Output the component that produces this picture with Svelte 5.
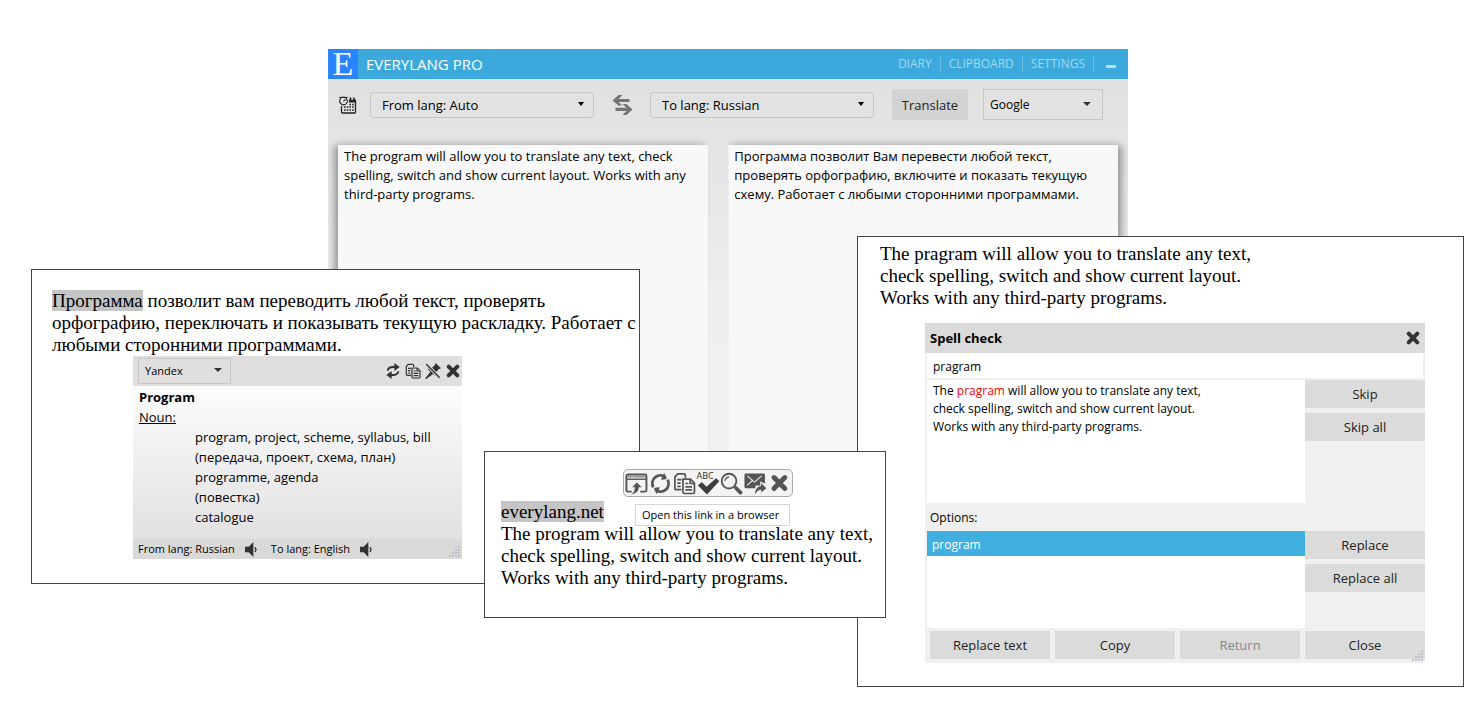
<script>
    let source = $state(
        "The program will allow you to translate any text, check spelling, switch and show current layout. Works with any third-party programs.",
    );
    let result = $state(
        "Программа позволит Вам перевести любой текст, проверять орфографию, включите и показать текущую схему. Работает с любыми сторонними программами.",
    );
    let word = $state("pragram");

    const meanings = [
        "program, project, scheme, syllabus, bill",
        "(передача, проект, схема, план)",
        "programme, agenda",
        "(повестка)",
        "catalogue",
    ];
    const menu = ["DIARY", "CLIPBOARD", "SETTINGS"];
</script>

{#snippet closeIcon()}
    <svg viewBox="0 0 24 24" aria-hidden="true">
        <path d="M5.5 5.5 18.5 18.5M18.5 5.5 5.5 18.5" stroke="currentColor" stroke-width="6" stroke-linecap="round" />
    </svg>
{/snippet}

{#snippet copyIcon()}
    <svg viewBox="0 0 24 24" fill="none" stroke="currentColor" stroke-width="1.8" aria-hidden="true">
        <path d="M9 18.5H3.5a1.5 1.5 0 0 1-1.5-1.5V5l3-3h6.500a1.500 1.500 0 0 1 1.500 1.500V6" />
        <path d="M4.500 8H9M4.500 11.500H8M4.500 15H8" />
        <path d="M10.500 7.500H18.500L22.500 11.500V21a1.500 1.500 0 0 1-1.500 1.500H12a1.500 1.500 0 0 1-1.500-1.500Z" />
        <path d="M18 7.500V12H22.500M13 12H16M13 15.500H20M13 18.800H20" />
    </svg>
{/snippet}

{#snippet speakerIcon()}
    <svg viewBox="0 0 14 16" aria-hidden="true">
        <path d="M0 5H4L9 0V16L4 11H0Z" fill="currentColor" />
        <path d="M10.500 5.500Q13 8 10.500 10.500" fill="none" stroke="currentColor" stroke-width="1.500" />
    </svg>
{/snippet}

{#snippet grip()}
    <svg class="grip" viewBox="0 0 12 12" aria-hidden="true">
        {#each [[9, 0], [6, 3], [9, 3], [3, 6], [6, 6], [9, 6], [0, 9], [3, 9], [6, 9], [9, 9]] as [x, y]}
            <rect {x} {y} width="2" height="2" />
        {/each}
    </svg>
{/snippet}

<main>
    <section class="translator">
        <header class="titlebar">
            <span class="logo">E</span>
            <h1>EVERYLANG PRO</h1>
            <nav>
                {#each menu as item}
                    <a href="#{item.toLowerCase()}">{item}</a>
                {/each}
                <button class="minimize" aria-label="Minimize"></button>
            </nav>
        </header>
        <div class="controls">
            <button class="history" aria-label="History">
                <svg viewBox="0 0 20 20" fill="none" stroke="#222" aria-hidden="true">
                    <path d="M11 5.500H17.500V17a1 1 0 0 1-1 1H4.500a1 1 0 0 1-1-1V11" stroke-width="1.300" />
                    <path d="M11 6.500H17.500" stroke-width="2" />
                    <path d="M12.500 2.500V6M16 2.500V6" stroke-width="1.600" />
                    <circle cx="5.500" cy="6" r="3.800" stroke-width="1.200" />
                    <path d="M5.500 6.500 7.500 4M3 3 1.500 2M8 3 9.500 2" stroke-width="1.100" />
                    <path d="M6 12H16M6 15H16" stroke-width="1.500" stroke-dasharray="1.600 1.100" />
                    <path d="M11.400 9.500H16" stroke-width="1.300" stroke-dasharray="1.600 1.100" />
                </svg>
            </button>
            <div class="drop lang">
                <select aria-label="From language"><option>From lang: Auto</option></select>
            </div>
            <button class="swap" aria-label="Swap languages">
                <svg viewBox="0 0 20 20" fill="#737373" aria-hidden="true">
                    <path d="M0 5.500 6 0H10L6 4H17V7H6L10 10.500H6Z" />
                    <path d="M20 14.500 14 9H10L14 12.800H3V16H14L10 20H14Z" />
                </svg>
            </button>
            <div class="drop lang">
                <select aria-label="To language"><option>To lang: Russian</option></select>
            </div>
            <button class="translate">Translate</button>
            <div class="drop engine">
                <select aria-label="Translation service"><option>Google</option></select>
            </div>
        </div>
        <div class="panels">
            <textarea class="from" aria-label="Source text" spellcheck="false" bind:value={source}></textarea>
            <textarea class="to" aria-label="Translation" spellcheck="false" bind:value={result}></textarea>
        </div>
    </section>

    <section class="sheet spelling">
        <p>
            The pragram will allow you to translate any text,<br />
            check spelling, switch and show current layout.<br />
            Works with any third-party programs.
        </p>
        <div class="dialog">
            <header>
                <h2>Spell check</h2>
                <button class="icon" aria-label="Close spell check">{@render closeIcon()}</button>
            </header>
            <input class="word" aria-label="Misspelled word" spellcheck="false" bind:value={word} />
            <div class="split">
                <div class="context">
                    The <em>pragram</em> will allow you to translate any text,<br />
                    check spelling, switch and show current layout.<br />
                    Works with any third-party programs.
                </div>
                <div class="side">
                    <button>Skip</button>
                    <button>Skip all</button>
                </div>
            </div>
            <label for="options">Options:</label>
            <div class="split">
                <select id="options" size="4">
                    <option selected>program</option>
                </select>
                <div class="side">
                    <button>Replace</button>
                    <button>Replace all</button>
                </div>
            </div>
            <footer>
                <button>Replace text</button>
                <button>Copy</button>
                <button disabled>Return</button>
                <button>Close</button>
            </footer>
            {@render grip()}
        </div>
    </section>

    <section class="sheet dictionary">
        <p>
            <mark>Программа</mark> позволит вам переводить любой текст, проверять<br />
            орфографию, переключать и показывать текущую раскладку. Работает с<br />
            любыми сторонними программами.
        </p>
        <div class="card">
            <header>
                <div class="drop small">
                    <select aria-label="Dictionary service"><option>Yandex</option></select>
                </div>
                <button class="icon" aria-label="Refresh">
                    <svg viewBox="0 0 24 24" fill="none" stroke="currentColor" stroke-width="3" aria-hidden="true">
                        <path d="M4 11.500Q5 6 12 6H16" />
                        <path d="M20 12.500Q19 18 12 18H8" />
                        <path d="M14 0 22 6 14 12ZM10 24 2 18 10 12Z" fill="currentColor" stroke="none" />
                    </svg>
                </button>
                <button class="icon" aria-label="Copy translation">{@render copyIcon()}</button>
                <button class="icon" aria-label="Unpin">
                    <svg viewBox="0 0 24 24" fill="currentColor" stroke="currentColor" aria-hidden="true">
                        <path d="M16 0 24 8 20.500 9.500 16.500 14 16 20 12 16.500 2 24 0 23.500 8 13 3.500 8.500 10 8 14.500 3.500Z" stroke="none" />
                        <path d="M2 2 22 22" stroke="#e0dfde" stroke-width="5" />
                        <path d="M2 2 22 22" stroke-width="2.200" />
                    </svg>
                </button>
                <button class="icon" aria-label="Close dictionary">{@render closeIcon()}</button>
            </header>
            <div class="entry">
                <h2>Program</h2>
                <u>Noun:</u>
                <ul>
                    {#each meanings as meaning}
                        <li>{meaning}</li>
                    {/each}
                </ul>
            </div>
            <footer>
                <span>From lang: Russian</span>
                <button aria-label="Listen in Russian">{@render speakerIcon()}</button>
                <span>To lang: English</span>
                <button aria-label="Listen in English">{@render speakerIcon()}</button>
            </footer>
            {@render grip()}
        </div>
    </section>

    <section class="sheet link">
        <div class="actions">
            <button aria-label="Open in browser">
                <svg viewBox="0 0 24 24" fill="none" stroke="currentColor" aria-hidden="true">
                    <path d="M7 20.500H3a1.500 1.500 0 0 1-1.500-1.500V4A1.500 1.500 0 0 1 3 2.500H21A1.500 1.500 0 0 1 22.500 4V19a1.500 1.500 0 0 1-1.500 1.500H16" stroke-width="2" />
                    <path d="M2 7.500H22" stroke-width="1.500" />
                    <path d="M3.500 5H8" stroke-width="1.500" stroke-dasharray="1.200 .6" />
                    <path d="M9 5H21" stroke-width="1" />
                    <path d="M12.500 11 17.500 16H14.500Q14.500 22.500 6.500 23.500 10.500 21 10.500 16H7.500Z" fill="currentColor" stroke="none" />
                </svg>
            </button>
            <button aria-label="Translate selection">
                <svg viewBox="0 0 24 24" fill="none" stroke="currentColor" stroke-width="3" aria-hidden="true">
                    <path d="M4.500 16A8.500 8.500 0 0 1 17.500 5.500" />
                    <path d="M19.500 8A8.500 8.500 0 0 1 6.500 18.500" />
                    <path d="M12.500 8 19 7.500 16 1ZM11.500 16 5 16.500 8 23Z" fill="currentColor" stroke="none" />
                    <path d="M16.500 9.500 22 4.500M7.500 14.500 2 19.500" stroke="#f3f3f3" stroke-width="1.200" />
                </svg>
            </button>
            <button aria-label="Copy">{@render copyIcon()}</button>
            <button class="check" aria-label="Check spelling">
                <span>ABC</span>
                <svg viewBox="0 0 24 24" aria-hidden="true">
                    <path d="M1 14 5 10.500 10 15.500 20 6.500 23.500 9.500 10.500 23.500Z" fill="#3d3d3d" />
                </svg>
            </button>
            <button aria-label="Search">
                <svg viewBox="0 0 24 24" fill="none" stroke="currentColor" aria-hidden="true">
                    <circle cx="9.500" cy="9.500" r="7.700" stroke-width="2" />
                    <path d="M5 9.500Q5.500 5.500 9.500 5" stroke-width="1.200" />
                    <path d="M15 15 16.500 16.500" stroke-width="2" />
                    <path d="M17 17 21.500 21.500" stroke-width="4" stroke-linecap="round" />
                </svg>
            </button>
            <button aria-label="Send by mail">
                <svg viewBox="0 0 24 24" fill="currentColor" aria-hidden="true">
                    <path d="M2 1.500H20.500A1.500 1.500 0 0 1 22 3V12L17 10V14H12V17H2A1.500 1.500 0 0 1 .5 15.500V3A1.500 1.500 0 0 1 2 1.500Z" />
                    <path d="M3.500 4 11 10.500 18.500 4M3.500 14 8.500 9" fill="none" stroke="#f3f3f3" stroke-width="1.100" />
                    <path d="M18 11.500 23.500 17 18 21.500V18.500Q14 18.500 11.500 23.500 11.500 15 18 14.500Z" />
                </svg>
            </button>
            <button class="quit" aria-label="Close toolbar">{@render closeIcon()}</button>
            <span class="tip" role="tooltip">Open this link in a browser</span>
        </div>
        <p>
            <mark>everylang.net</mark><br />
            The program will allow you to translate any text,<br />
            check spelling, switch and show current layout.<br />
            Works with any third-party programs.
        </p>
    </section>
</main>

<style>
    :global(body) {
        margin: 0;
        background: #fff;
    }

    main {
        position: relative;
        min-height: 705px;
        overflow: hidden;
        font: 13px/20px "Open Sans", "Noto Sans", sans-serif;
        color: #000;
    }

    * {
        box-sizing: border-box;
    }

    h1, h2, p, ul {
        margin: 0;
        padding: 0;
        font-weight: normal;
        list-style: none;
    }

    button, select, input, textarea {
        margin: 0;
        padding: 0;
        border: 0;
        border-radius: 0;
        background: none;
        font: inherit;
        color: inherit;
    }

    svg {
        display: block;
        width: 100%;
        height: 100%;
    }

    /* windows on the desktop */
    .translator, .sheet {
        position: absolute;
    }

    .translator {
        display: flex;
        flex-direction: column;
        top: 49px;
        left: 328px;
        right: 349px;
        height: 500px;
        background: linear-gradient(#dfdfdf, #f0f0f0 300px);
    }

    .sheet {
        border: 1px solid #444;
        background: #fff;
    }

    .sheet > p {
        font: 19px/22px "Liberation Serif", serif;
        white-space: nowrap;
    }

    mark {
        background: #c5c5c5;
        color: inherit;
    }

    /* translator */
    .titlebar {
        display: flex;
        align-items: center;
        height: 30px;
        background: #3ba9dc;
        color: #fff;
    }

    .logo {
        width: 30px;
        height: 30px;
        background: #2a84ff;
        font: 34px/30px "Liberation Serif", serif;
        text-align: center;
    }

    h1 {
        margin-left: 8px;
        font-size: 15px;
    }

    nav {
        display: flex;
        align-items: center;
        margin-left: auto;
        padding-right: 12px;
        font-size: 12px;
        line-height: 14px;
        color: #a4d8ef;
    }

    nav a {
        padding-right: 8px;
        margin-right: 8px;
        border-right: 1px solid #70c0e5;
        color: inherit;
        text-decoration: none;
    }

    .minimize {
        width: 10px;
        height: 3px;
        margin: 4px 0 0 4px;
        background: #b5dff2;
    }

    .controls {
        display: flex;
        align-items: center;
        padding: 10px 25px 25px 10px;
    }

    .history {
        width: 20px;
        height: 20px;
        margin-right: 12px;
    }

    .swap {
        width: 21px;
        height: 20px;
        margin: 0 17px 0 18px;
    }

    .drop {
        position: relative;
        border: 1px solid #c6c6c6;
    }

    .drop::after {
        content: "";
        position: absolute;
        right: 9px;
        top: 50%;
        margin-top: -3px;
        border: 3px solid transparent;
        border-top: 4px solid #000;
        border-bottom: 0;
        pointer-events: none;
    }

    .drop select {
        display: block;
        width: 100%;
        height: 100%;
        appearance: none;
        outline: 0;
    }

    .lang {
        flex: 1;
        height: 26px;
        border-radius: 3px;
    }

    .lang select {
        padding-left: 11px;
    }

    .translate {
        width: 76px;
        height: 31px;
        margin: 0 15px 0 18px;
        background: #d3d3d3;
        color: #222;
    }

    .engine {
        width: 120px;
        height: 31px;
    }

    .engine select {
        padding-left: 6px;
        font-size: 12px;
    }

    .small select {
        padding-left: 6px;
        font-size: 11px;
    }

    .engine::after, .small::after {
        right: 11px;
        border-width: 4px 4px 0;
        border-top-color: #333;
    }

    /* the top padding leaves room for the shadow inside the clipped row */
    .panels {
        flex: 1;
        display: flex;
        gap: 20px;
        margin-top: -10px;
        padding: 10px 10px 0;
        overflow: hidden;
    }

    .panels textarea {
        min-width: 0;
        padding: 2px 6px;
        background: #f8f8f8;
        line-height: 19px;
        resize: none;
        outline: 0;
    }

    .from {
        flex: 37;
        box-shadow: -3px 1px 8px rgba(0, 0, 0, 0.4);
        clip-path: inset(-10px 0 0 -10px);
    }

    .to {
        flex: 39;
        box-shadow: 3px 1px 8px rgba(0, 0, 0, 0.4);
        clip-path: inset(-10px -10px 0 0);
    }

    /* spell check */
    .spelling {
        top: 236px;
        right: 13px;
        width: 607px;
        padding: 6px 38px 23px 22px;
    }

    .dialog {
        position: relative;
        margin: 14px 0 0 45px;
        padding: 0 0 4px 2px;
        background: #f0f0f0;
    }

    .dialog header {
        display: flex;
        align-items: center;
        height: 30px;
        margin-left: -2px;
        padding: 0 4px 0 5px;
        background: #dbdbdb;
    }

    h2 {
        flex: 1;
        font-size: 13px;
        font-weight: bold;
    }

    .icon {
        width: 16px;
        height: 16px;
        color: #333;
    }

    .word {
        display: block;
        width: calc(100% - 2px);
        height: 25px;
        margin-bottom: 2px;
        padding: 1px 6px 0;
        background: #fff;
        font-size: 12px;
        outline: 0;
    }

    .split {
        display: flex;
    }

    .context, #options {
        flex: 1;
        background: #fff;
        font-size: 12px;
    }

    .context {
        height: 123px;
        padding: 2px 6px;
        line-height: 18px;
    }

    em {
        font-style: normal;
        color: #f00;
    }

    .side {
        display: flex;
        flex-direction: column;
        gap: 5px;
        width: 120px;
    }

    .side button, .dialog footer button {
        height: 28px;
        background: #dbdbdb;
        color: #222;
    }

    .dialog label {
        display: block;
        padding: 5px 3px 3px;
        font-size: 12px;
    }

    #options {
        height: 97px;
        outline: 0;
        overflow: hidden;
    }

    #options option {
        min-height: 25px;
        padding: 5px 5px 0;
    }

    #options option:checked {
        background: #41b0e1 linear-gradient(#41b0e1, #41b0e1);
        color: #fff;
        -webkit-text-fill-color: #fff;
    }

    .dialog footer {
        display: flex;
        gap: 5px;
        padding: 3px 0 0 3px;
    }

    .dialog footer button {
        flex: 1;
    }

    .dialog footer button:disabled {
        color: #888;
    }

    .grip {
        position: absolute;
        right: 1px;
        bottom: 1px;
        width: 12px;
        height: 12px;
        fill: #bcc2cf;
    }

    /* dictionary */
    .dictionary {
        top: 269px;
        left: 31px;
        width: 609px;
        padding: 20px 13px 24px 20px;
    }

    .card {
        position: relative;
        width: 329px;
        margin-left: 81px;
        background: linear-gradient(#fdfdfd 30px, #e2e0e1 183px);
    }

    .card header {
        display: flex;
        align-items: center;
        gap: 4px;
        height: 30px;
        padding: 0 1px 0 5px;
        background: #e0dfde;
    }

    .small {
        width: 93px;
        height: 26px;
        margin-right: auto;
    }

    .small::after {
        right: 8px;
    }

    .entry {
        padding: 1px 6px 12px;
    }

    .entry ul {
        padding-left: 56px;
    }

    .card footer {
        display: flex;
        align-items: center;
        height: 20px;
        padding-left: 5px;
        background: #d9d9d9;
        font-size: 11px;
    }

    .card footer button {
        width: 13px;
        height: 15px;
        margin: 0 13px 0 10px;
        color: #333;
    }

    /* link toolbar */
    .link {
        top: 451px;
        left: 484px;
        width: 402px;
        padding: 17px 16px 28px;
    }

    .actions {
        position: relative;
        display: flex;
        align-items: center;
        gap: 1px;
        width: 170px;
        height: 28px;
        margin: 0 0 4px 122px;
        padding: 0 1px;
        border: 1px solid #aaa;
        border-radius: 5px;
        background: #f3f3f3;
        color: #555;
    }

    .actions button {
        flex: 1;
        height: 23px;
    }

    .actions .quit {
        height: 20px;
    }

    .check {
        position: relative;
    }

    .check span {
        position: absolute;
        top: 0;
        left: 0;
        color: #333;
        font-size: 9px;
        line-height: 8px;
    }

    .tip {
        position: absolute;
        top: 34px;
        left: 11px;
        padding: 0 10px 0 6px;
        border: 1px solid #d5d5d5;
        background: #fff;
        color: #000;
        font-size: 11px;
        white-space: nowrap;
    }
</style>
